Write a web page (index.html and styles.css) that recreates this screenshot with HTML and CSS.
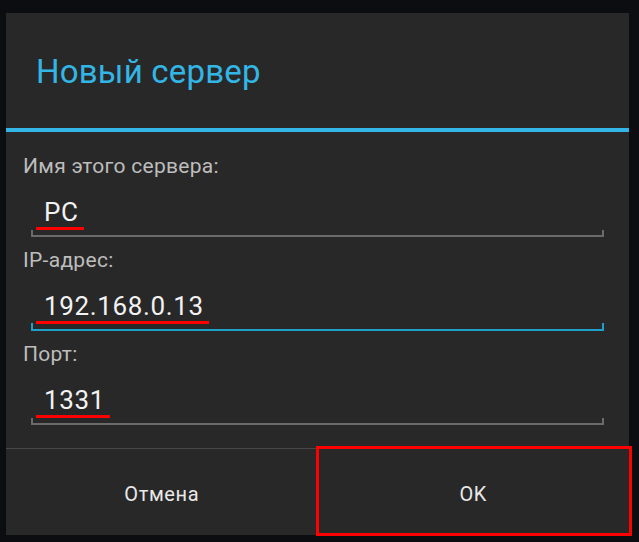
FILE: index.html
```html
<!DOCTYPE html>
<html>
<head>
    <meta charset="UTF-8">
    <title>Новый сервер</title>
    <link rel="stylesheet" href="styles.css">
</head>
<body>
    <div class="dialog">
        <div class="dialog-header">
            <h1 class="dialog-title">Новый сервер</h1>
        </div>

        <div class="dialog-body">
            <div class="field">
                <label class="field-label">Имя этого сервера:</label>
                <div class="field-input">
                    <span class="field-value marked">PC</span>
                </div>
            </div>

            <div class="field">
                <label class="field-label">IP-адрес:</label>
                <div class="field-input focused">
                    <span class="field-value marked">192.168.0.13</span>
                </div>
            </div>

            <div class="field">
                <label class="field-label">Порт:</label>
                <div class="field-input">
                    <span class="field-value marked">1331</span>
                </div>
            </div>
        </div>

        <div class="dialog-footer">
            <button class="dialog-button">Отмена</button>
            <button class="dialog-button highlighted">OK</button>
        </div>
    </div>
</body>
</html>
```

FILE: styles.css
```css
body {
    margin: 0;
    width: 639px;
    height: 542px;
    background-color: #0c0d11;
    font-family: Roboto, "Noto Sans", sans-serif;
    overflow: hidden;
}

.dialog {
    display: flex;
    flex-direction: column;
    margin: 13px 0 0 6px;
    width: 623px;
    height: 522px;
    background-color: #282828;
}

.dialog-header {
    box-sizing: border-box;
    height: 119px;
    padding: 40px 0 0 30px;
    border-bottom: 4px solid #33b5e5;
}

.dialog-title {
    margin: 0;
    font-size: 33px;
    font-weight: 400;
    line-height: 38px;
    letter-spacing: 0.2px;
    color: #33b5e5;
}

.dialog-body {
    flex: 1;
    display: flex;
    flex-direction: column;
    gap: 11px;
    padding: 22px 25px 0 17px;
}

.field {
    display: flex;
    flex-direction: column;
}

.field-label {
    font-size: 21px;
    line-height: 24px;
    letter-spacing: 0.3px;
    color: #bdbdbd;
}

.field-input {
    position: relative;
    margin-left: 8px;
    padding: 19px 0 8px 13px;
    font-size: 26px;
    line-height: 30px;
    border-bottom: 2px solid #6a6a6a;
}

.field-input:before,
.field-input:after {
    content: "";
    position: absolute;
    bottom: -2px;
    width: 2px;
    height: 7px;
    background-color: #6a6a6a;
}

.field-input:before {
    left: 0;
}

.field-input:after {
    right: 0;
}

.field-input.focused {
    border-bottom-color: #1ea0cb;
}

.field-input.focused:before,
.field-input.focused:after {
    height: 8px;
    background-color: #1ea0cb;
}

.field-value {
    position: relative;
    display: inline-block;
    letter-spacing: 0.65px;
    color: #f2f2f2;
}

.marked:after {
    content: "";
    position: absolute;
    top: 100%;
    left: -8px;
    right: -5px;
    height: 3px;
    background-color: #ff0000;
}

.dialog-footer {
    display: flex;
    height: 86px;
    border-top: 1px solid #474747;
}

.dialog-button {
    position: relative;
    flex: 1;
    padding: 4px 0 0;
    border: none;
    background: transparent;
    font-family: Roboto, "Noto Sans", sans-serif;
    font-size: 20px;
    letter-spacing: 0.6px;
    color: #e8e8e8;
}

.dialog-button.highlighted:after {
    content: "";
    position: absolute;
    top: -3px;
    left: -2px;
    right: -3px;
    bottom: -1px;
    border: 3px solid #ff0000;
}
```
